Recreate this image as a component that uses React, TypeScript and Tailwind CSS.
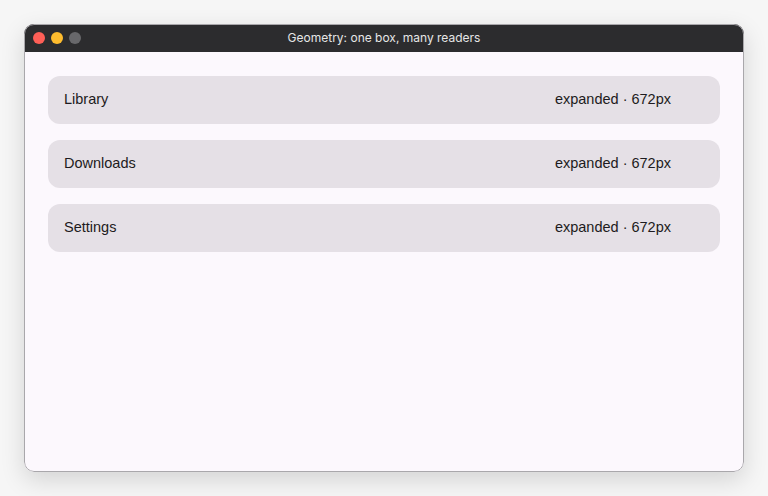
import React from "react";

const rows = ["Library", "Downloads", "Settings"];

const App = () => {
	return (
		<div className="w-[768px] h-[496px] bg-[#f6f6f6] p-6 font-['Inter','Liberation_Sans',sans-serif]">
			<div className="relative flex flex-col h-[448px] w-[720px] rounded-[10px] overflow-hidden bg-[#fcf8fd] shadow-[0_8px_24px_rgba(0,0,0,0.14)]">
				{/* Title bar */}
				<div className="relative flex items-center h-7 shrink-0 bg-[#2c2c2e] px-[9px]">
					<div className="flex items-center gap-[6px]">
						<span className="w-3 h-3 rounded-full bg-[#fe5f57]" />
						<span className="w-3 h-3 rounded-full bg-[#febc2e]" />
						<span className="w-3 h-3 rounded-full bg-[#68686b]" />
					</div>
					<div className="absolute inset-0 flex items-center justify-center text-[12px] text-[#e6e6e6]">
						Geometry: one box, many readers
					</div>
				</div>
				{/* Content */}
				<div className="flex flex-col gap-4 px-6 pt-6">
					{rows.map((label) => (
						<div
							key={label}
							className="flex items-center justify-between h-12 rounded-xl bg-[#e5e0e6] pl-4 pr-[49px] text-[14.5px] leading-5 text-[#1d1b20] font-['Liberation_Sans',sans-serif]"
						>
							<span className="-mt-[2px]">{label}</span>
							<span className="-mt-[2px]">expanded · 672px</span>
						</div>
					))}
				</div>
				{/* Window edge */}
				<div className="absolute inset-0 rounded-[10px] border border-[#a9a7ab] pointer-events-none" />
			</div>
		</div>
	);
};

export default App;
